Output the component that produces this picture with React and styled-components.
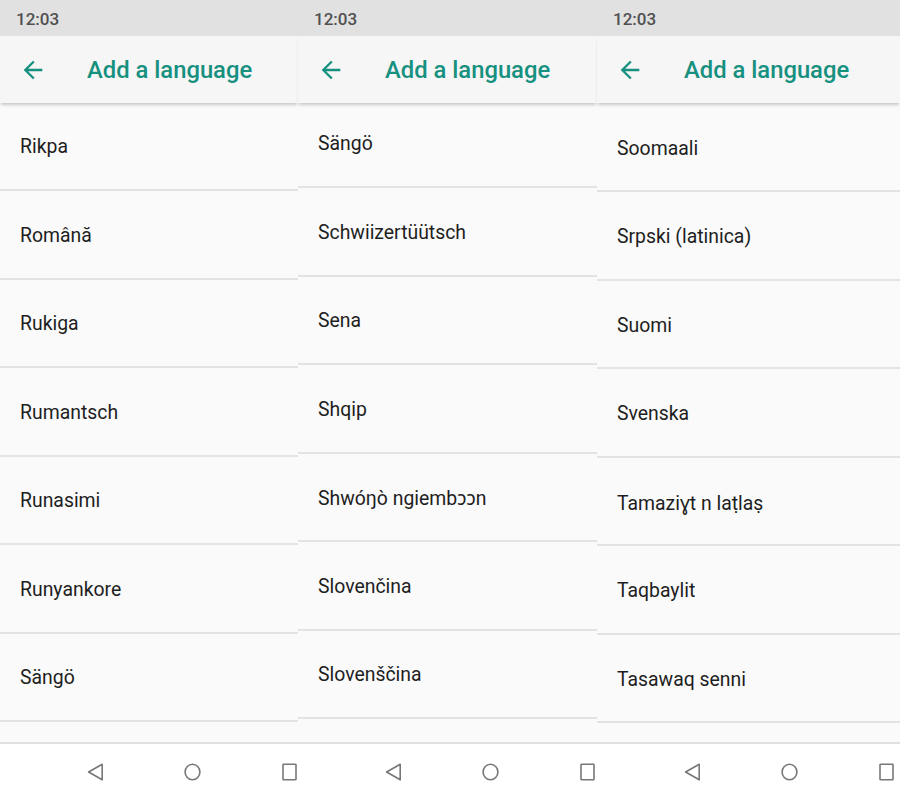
import styled, {createGlobalStyle} from "styled-components"

const GlobalStyle = createGlobalStyle`
  html, body {
    margin: 0;
    padding: 0;
    background: #fafafa;
  }
  body {
    font-family: Roboto, "Noto Sans", "DejaVu Sans", sans-serif;
  }
`

const Screens = styled.div`
  display: grid;
  grid-template-columns: 298px 299px 1fr;
  width: 900px;
  height: 801px;
  overflow: hidden;
`

const Phone = styled.section`
  display: flex;
  flex-direction: column;
  height: 801px;
  min-width: 0;
  background: #fafafa;
`

const StatusBar = styled.div`
  height: 36px;
  flex: none;
  background: #e1e1e1;
  color: #505050;
  font-size: 17px;
  font-weight: 500;
  display: flex;
  align-items: center;
  padding-left: ${p => p.$pad}px;
  padding-top: 1px;
  box-sizing: border-box;
`

const AppBar = styled.header`
  height: 67px;
  flex: none;
  background: #f6f6f6;
  display: flex;
  align-items: center;
  box-shadow: 0 3px 3px -1px rgba(0, 0, 0, 0.2);
  position: relative;
  z-index: 1;
`

const BackButton = styled.div`
  width: 28px;
  height: 28px;
  margin-left: 19px;
  margin-right: 40px;
  display: flex;
  svg {
    width: 28px;
    height: 28px;
    fill: #16907f;
  }
`

const Title = styled.h1`
  margin: 0;
  font-size: 23.8px;
  font-weight: 500;
  color: #16907f;
`

const ListView = styled.div`
  flex: 1;
  overflow: hidden;
  border-bottom: 2px solid #e0e0e0;
`

const ListInner = styled.div`
  margin-top: ${p => p.$offset}px;
`

const Row = styled.div`
  height: 88.5px;
  box-sizing: border-box;
  border-bottom: 2px solid #e3e3e3;
  display: flex;
  align-items: center;
  padding-left: 20px;
  padding-top: 2px;
  font-size: 19.4px;
  color: #1e1e1e;
  white-space: nowrap;
`

const NavBar = styled.nav`
  height: 57px;
  flex: none;
  background: #ffffff;
  display: flex;
  align-items: center;
  padding-left: 87px;
  gap: 80px;
  padding-bottom: 2px;
  box-sizing: border-box;
  svg {
    width: 17px;
    height: 18px;
    stroke: #777;
    stroke-width: 1.6;
    fill: none;
  }
`

const screens = [
  {
    pad: 16,
    offset: -0.5,
    items: ["Rikpa", "Română", "Rukiga", "Rumantsch", "Runasimi", "Runyankore", "Sängö", ""],
  },
  {
    pad: 16,
    offset: -3.5,
    items: ["Sängö", "Schwiizertüütsch", "Sena", "Shqip", "Shwóŋò ngiembɔɔn", "Slovenčina", "Slovenščina", ""],
  },
  {
    pad: 16,
    offset: 0.8,
    items: ["Soomaali", "Srpski (latinica)", "Suomi", "Svenska", "Tamaziɣt n laṭlaṣ", "Taqbaylit", "Tasawaq senni", ""],
  },
]

const ArrowBack = () => (
  <svg viewBox="0 0 24 24">
    <path d="M20 11H7.83l5.59-5.59L12 4l-8 8 8 8 1.41-1.41L7.83 13H20v-2z" />
  </svg>
)

const PhoneScreen = ({screen}) => {
  const {pad, offset, items} = screen
  return (
    <Phone>
      <StatusBar $pad={pad}>12:03</StatusBar>
      <AppBar>
        <BackButton>
          <ArrowBack />
        </BackButton>
        <Title>Add a language</Title>
      </AppBar>
      <ListView>
        <ListInner $offset={offset}>
          {items.map((item, i) => (
            <Row key={i}>{item}</Row>
          ))}
        </ListInner>
      </ListView>
      <NavBar>
        <svg viewBox="0 0 17 18">
          <path d="M15.2 1.2 L1.6 9 L15.2 16.8 Z" strokeLinejoin="round" />
        </svg>
        <svg viewBox="0 0 17 18">
          <ellipse cx="8.5" cy="9" rx="7.4" ry="7.8" />
        </svg>
        <svg viewBox="0 0 17 18">
          <rect x="2" y="1.2" width="13" height="15.6" rx="0.6" />
        </svg>
      </NavBar>
    </Phone>
  )
}

const App = () => {
  return (
    <>
      <GlobalStyle />
      <Screens>
        {screens.map((s, i) => (
          <PhoneScreen key={i} screen={s} />
        ))}
      </Screens>
    </>
  )
}

export default App
